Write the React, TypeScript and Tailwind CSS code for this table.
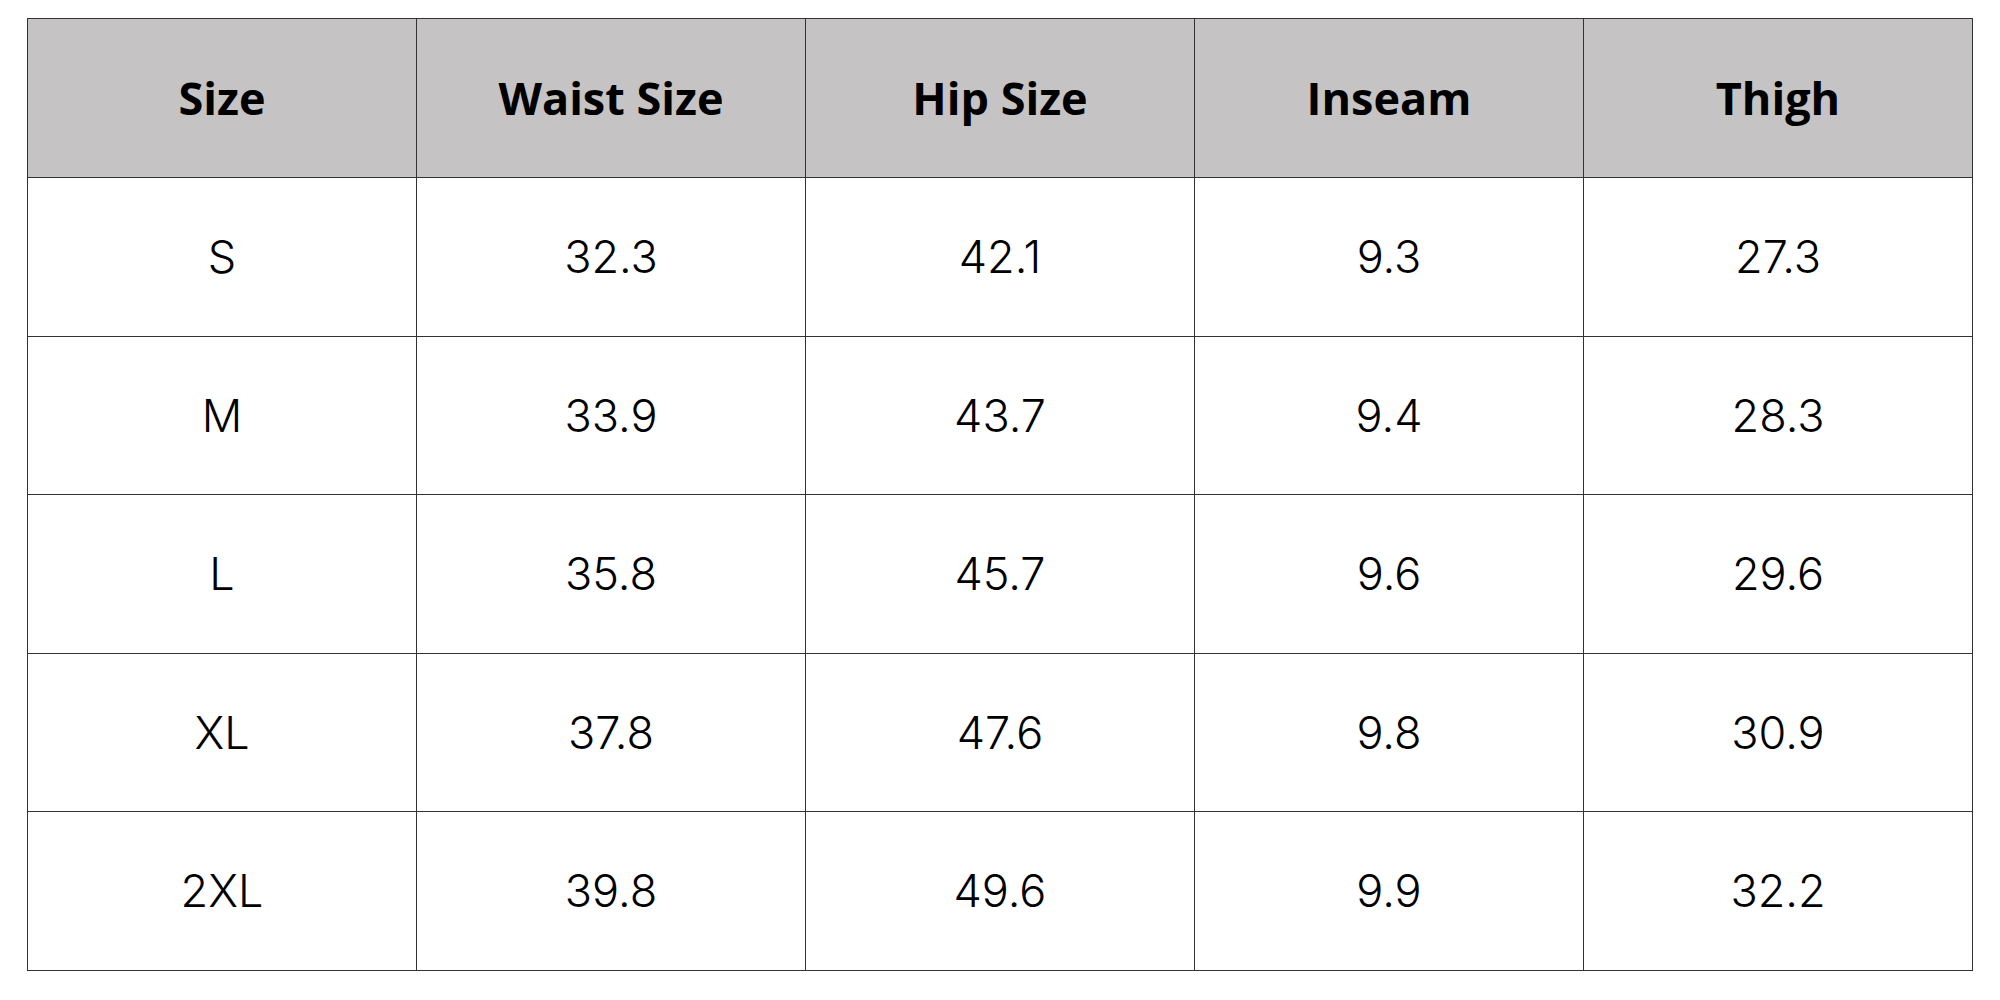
const headers = ['Size', 'Waist Size', 'Hip Size', 'Inseam', 'Thigh'];

const rows = [
  ['S', '32.3', '42.1', '9.3', '27.3'],
  ['M', '33.9', '43.7', '9.4', '28.3'],
  ['L', '35.8', '45.7', '9.6', '29.6'],
  ['XL', '37.8', '47.6', '9.8', '30.9'],
  ['2XL', '39.8', '49.6', '9.9', '32.2'],
];

export default function App() {
  return (
    <div className="w-[2000px] h-[1000px] bg-white pt-[18px] pl-[27px] text-black">
      <table className="w-[1946px] border-collapse table-fixed border border-[#555]">
        <thead>
          <tr className="h-[159px] bg-[#c5c3c4]">
            {headers.map((h) => (
              <th
                key={h}
                className="border border-[#333] font-['Open_Sans',sans-serif] text-[45px] font-bold text-center align-middle"
              >
                {h}
              </th>
            ))}
          </tr>
        </thead>
        <tbody>
          {rows.map((row) => (
            <tr key={row[0]} className="h-[158.6px]">
              {row.map((cell, i) => (
                <td
                  key={i}
                  className="border border-[#333] font-['Inter',sans-serif] text-[45px] font-light text-center align-middle"
                >
                  {cell}
                </td>
              ))}
            </tr>
          ))}
        </tbody>
      </table>
    </div>
  );
}
